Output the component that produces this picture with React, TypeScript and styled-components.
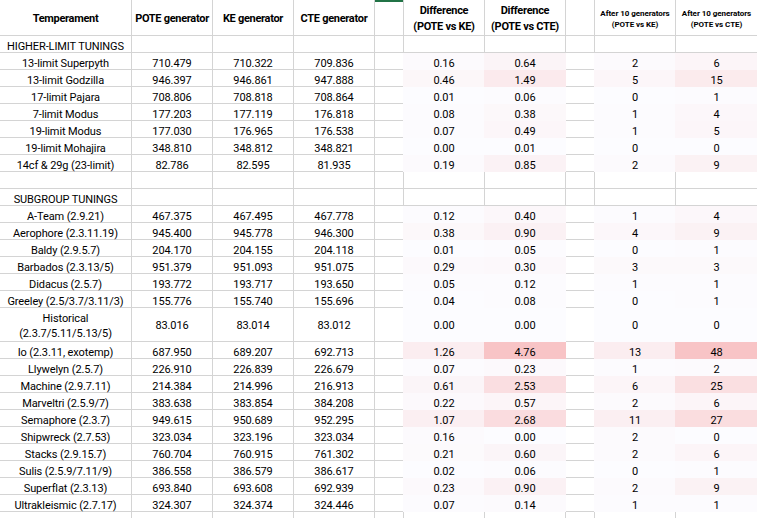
import React from "react";
import styled, { createGlobalStyle } from "styled-components";

const Global = createGlobalStyle`
  html, body { margin: 0; padding: 0; background: #fff; overflow: hidden; }
  body { width: 757px; height: 518px; }
`;

const GRID = "#d4d4d4";

const Sheet = styled.div`
  display: grid;
  grid-template-columns: 132px 81px 81px 81px 29px 81px 81px 29px 81px 82px;
  font-family: Roboto, "Liberation Sans", Arial, sans-serif;
  font-size: 11px;
  color: #000;
  width: 757px;
`;

const Cell = styled.div<{ $fill?: string; $tall?: boolean }>`
  box-sizing: border-box;
  height: ${(p) => (p.$tall ? 34 : 17)}px;
  border-right: 1px solid ${(p) => p.$fill ?? GRID};
  border-bottom: 1px solid ${(p) => p.$fill ?? GRID};
  background: ${(p) => p.$fill ?? "#fff"};
  box-shadow: ${(p) => (p.$fill ? `-1px 0 0 0 ${p.$fill}` : "none")};
  display: flex;
  align-items: center;
  justify-content: center;
  text-align: center;
  padding-top: ${(p) => (p.$tall ? 2 : 4)}px;
  line-height: 15px;
  white-space: pre-line;
  letter-spacing: -0.1px;
`;

const HeadCell = styled.div<{ $small?: boolean; $selected?: boolean }>`
  box-sizing: border-box;
  height: 36px;
  border-right: 1px solid ${GRID};
  border-bottom: 1px solid ${GRID};
  box-shadow: ${(p) => (p.$selected ? "inset 0 2px 0 0 #217346" : "none")};
  display: flex;
  flex-direction: column;
  align-items: center;
  justify-content: center;
  text-align: center;
  padding-top: ${(p) => (p.$small ? 2 : 3)}px;
  font-weight: 700;
  font-size: ${(p) => (p.$small ? "8px" : "11px")};
  line-height: ${(p) => (p.$small ? "11px" : "16px")};
  letter-spacing: ${(p) => (p.$small ? "-0.05px" : "-0.3px")};
  white-space: nowrap;
`;

type Row = [string, string, string, string, number, number, number, number] | string;

const rows: Row[] = [
  "HIGHER-LIMIT TUNINGS",
  ["13-limit Superpyth", "710.479", "710.322", "709.836", 0.16, 0.64, 2, 6],
  ["13-limit Godzilla", "946.397", "946.861", "947.888", 0.46, 1.49, 5, 15],
  ["17-limit Pajara", "708.806", "708.818", "708.864", 0.01, 0.06, 0, 1],
  ["7-limit Modus", "177.203", "177.119", "176.818", 0.08, 0.38, 1, 4],
  ["19-limit Modus", "177.030", "176.965", "176.538", 0.07, 0.49, 1, 5],
  ["19-limit Mohajira", "348.810", "348.812", "348.821", 0.0, 0.01, 0, 0],
  ["14cf & 29g (23-limit)", "82.786", "82.595", "81.935", 0.19, 0.85, 2, 9],
  "",
  "SUBGROUP TUNINGS",
  ["A-Team (2.9.21)", "467.375", "467.495", "467.778", 0.12, 0.4, 1, 4],
  ["Aerophore (2.3.11.19)", "945.400", "945.778", "946.300", 0.38, 0.9, 4, 9],
  ["Baldy (2.9.5.7)", "204.170", "204.155", "204.118", 0.01, 0.05, 0, 1],
  ["Barbados (2.3.13/5)", "951.379", "951.093", "951.075", 0.29, 0.3, 3, 3],
  ["Didacus (2.5.7)", "193.772", "193.717", "193.650", 0.05, 0.12, 1, 1],
  ["Greeley (2.5/3.7/3.11/3)", "155.776", "155.740", "155.696", 0.04, 0.08, 0, 1],
  ["Historical\n(2.3.7/5.11/5.13/5)", "83.016", "83.014", "83.012", 0.0, 0.0, 0, 0],
  ["Io (2.3.11, exotemp)", "687.950", "689.207", "692.713", 1.26, 4.76, 13, 48],
  ["Llywelyn (2.5.7)", "226.910", "226.839", "226.679", 0.07, 0.23, 1, 2],
  ["Machine (2.9.7.11)", "214.384", "214.996", "216.913", 0.61, 2.53, 6, 25],
  ["Marveltri (2.5.9/7)", "383.638", "383.854", "384.208", 0.22, 0.57, 2, 6],
  ["Semaphore (2.3.7)", "949.615", "950.689", "952.295", 1.07, 2.68, 11, 27],
  ["Shipwreck (2.7.53)", "323.034", "323.196", "323.034", 0.16, 0.0, 2, 0],
  ["Stacks (2.9.15.7)", "760.704", "760.915", "761.302", 0.21, 0.6, 2, 6],
  ["Sulis (2.5.9/7.11/9)", "386.558", "386.579", "386.617", 0.02, 0.06, 0, 1],
  ["Superflat (2.3.13)", "693.840", "693.608", "692.939", 0.23, 0.9, 2, 9],
  ["Ultrakleismic (2.7.17)", "324.307", "324.374", "324.446", 0.07, 0.14, 1, 1],
  "",
];

function scale(v: number, max: number): string {
  const t = Math.min(1, v / max);
  const from = [252, 252, 255];
  const to = [248, 196, 198];
  const c = from.map((f, i) => Math.round(f + (to[i] - f) * t));
  return `rgb(${c[0]},${c[1]},${c[2]})`;
}

const Empty = ({ n }: { n: number }) => (
  <>
    {Array.from({ length: n }, (_, i) => (
      <Cell key={i} />
    ))}
  </>
);

export default function App() {
  return (
    <>
      <Global />
      <Sheet>
        <HeadCell>Temperament</HeadCell>
        <HeadCell>POTE generator</HeadCell>
        <HeadCell>KE generator</HeadCell>
        <HeadCell>CTE generator</HeadCell>
        <HeadCell $selected />
        <HeadCell>
          <span>Difference</span>
          <span>(POTE vs KE)</span>
        </HeadCell>
        <HeadCell>
          <span>Difference</span>
          <span>(POTE vs CTE)</span>
        </HeadCell>
        <HeadCell />
        <HeadCell $small>
          <span>After 10 generators</span>
          <span>(POTE vs KE)</span>
        </HeadCell>
        <HeadCell $small>
          <span>After 10 generators</span>
          <span>(POTE vs CTE)</span>
        </HeadCell>

        {rows.map((r, i) => {
          if (typeof r === "string")
            return (
              <React.Fragment key={i}>
                <Cell>{r}</Cell>
                <Empty n={9} />
              </React.Fragment>
            );
          const [name, a, b, c, d1, d2, g1, g2] = r;
          const tall = name.includes("\n");
          return (
            <React.Fragment key={i}>
              <Cell $tall={tall}>{name}</Cell>
              <Cell $tall={tall}>{a}</Cell>
              <Cell $tall={tall}>{b}</Cell>
              <Cell $tall={tall}>{c}</Cell>
              <Cell $tall={tall} />
              <Cell $tall={tall} $fill={scale(d1, 4.76)}>{d1.toFixed(2)}</Cell>
              <Cell $tall={tall} $fill={scale(d2, 4.76)}>{d2.toFixed(2)}</Cell>
              <Cell $tall={tall} />
              <Cell $tall={tall} $fill={scale(g1, 48)}>{g1}</Cell>
              <Cell $tall={tall} $fill={scale(g2, 48)}>{g2}</Cell>
            </React.Fragment>
          );
        })}
      </Sheet>
    </>
  );
}
